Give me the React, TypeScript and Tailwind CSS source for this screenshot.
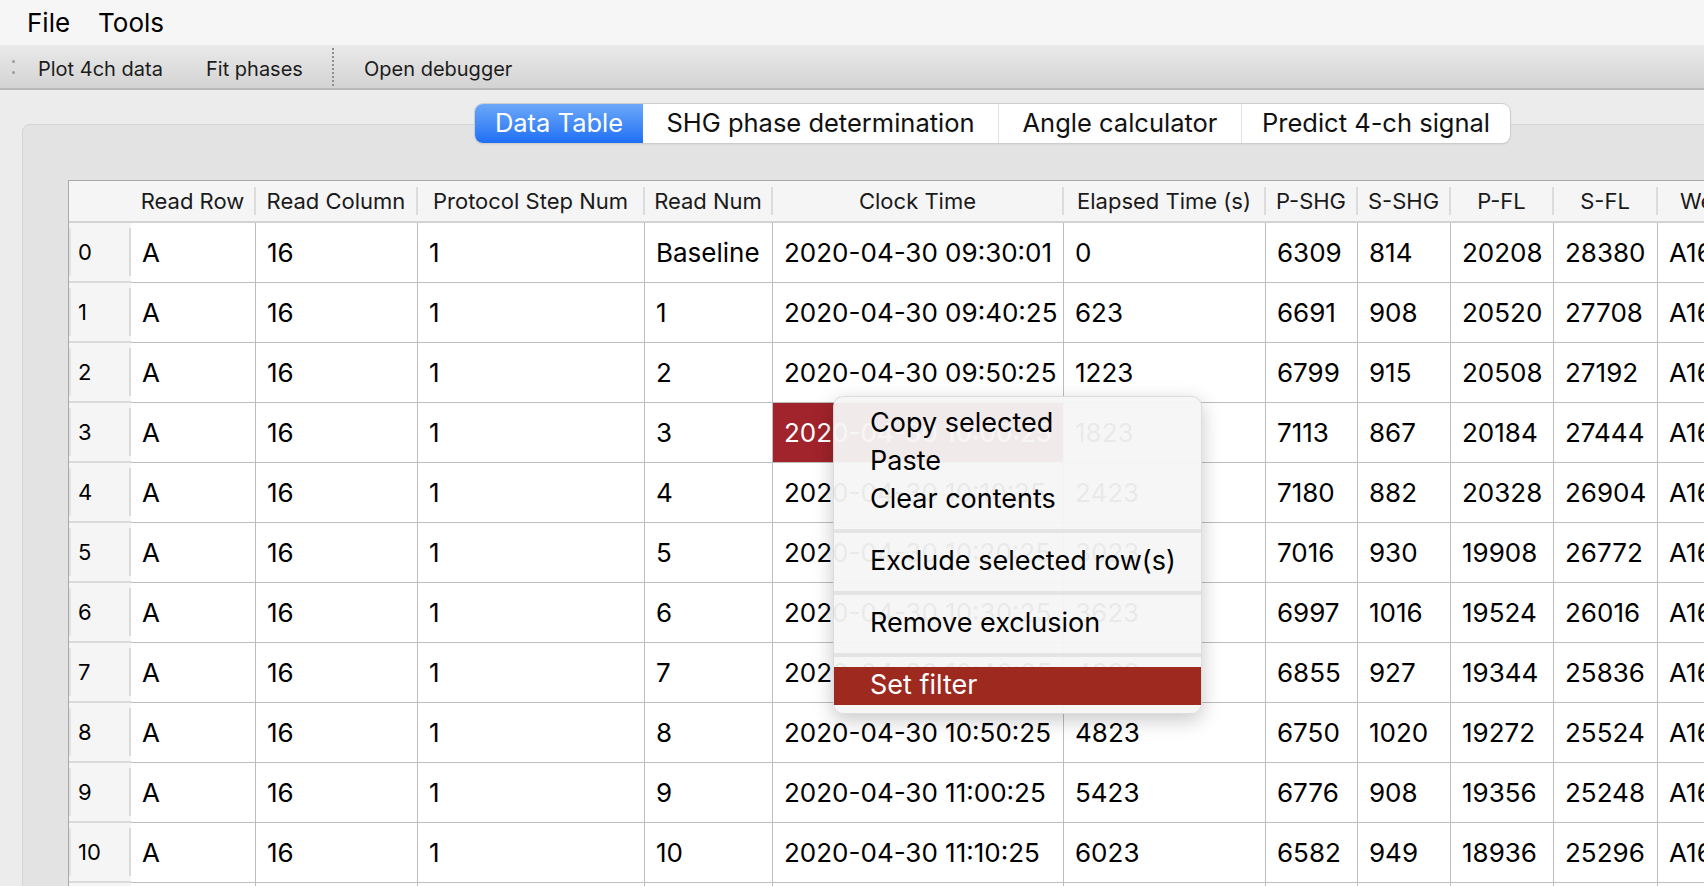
const cols = [
  { name: "Read Row", w: "w-[125px]" },
  { name: "Read Column", w: "w-[162px]" },
  { name: "Protocol Step Num", w: "w-[227px]" },
  { name: "Read Num", w: "w-[128px]" },
  { name: "Clock Time", w: "w-[291px]" },
  { name: "Elapsed Time (s)", w: "w-[202px]" },
  { name: "P-SHG", w: "w-[92px]" },
  { name: "S-SHG", w: "w-[93px]" },
  { name: "P-FL", w: "w-[103px]" },
  { name: "S-FL", w: "w-[104px]" },
  { name: "Well", w: "w-[88px]" },
];

const rows = [
  ["Baseline", "09:30:01", "0", "6309", "814", "20208", "28380"],
  ["1", "09:40:25", "623", "6691", "908", "20520", "27708"],
  ["2", "09:50:25", "1223", "6799", "915", "20508", "27192"],
  ["3", "10:00:25", "1823", "7113", "867", "20184", "27444"],
  ["4", "10:10:25", "2423", "7180", "882", "20328", "26904"],
  ["5", "10:20:25", "3023", "7016", "930", "19908", "26772"],
  ["6", "10:30:25", "3623", "6997", "1016", "19524", "26016"],
  ["7", "10:40:25", "4223", "6855", "927", "19344", "25836"],
  ["8", "10:50:25", "4823", "6750", "1020", "19272", "25524"],
  ["9", "11:00:25", "5423", "6776", "908", "19356", "25248"],
  ["10", "11:10:25", "6023", "6582", "949", "18936", "25296"],
  ["11", "11:20:25", "6623", "6610", "921", "18890", "25110"],
];

const tabs = [
  { label: "Data Table", w: "w-[168px]" },
  { label: "SHG phase determination", w: "w-[355px]" },
  { label: "Angle calculator", w: "w-[243px]" },
  { label: "Predict 4-ch signal", w: "w-[269px]" },
];

function HeaderRow() {
  return (
    <div className="flex h-[42px] bg-[#f5f5f5] border-b-2 border-[#d3d3d3]">
      <div className="w-[62px] shrink-0" />
      {cols.map((c, i) => (
        <div key={c.name} className={`${c.w} shrink-0 flex py-[6px]`}>
          <div className="flex-1 flex items-center justify-center text-[22px] text-[#1a1a1a] whitespace-nowrap">
            {c.name}
          </div>
          {i < cols.length - 1 && <div className="w-[2px] bg-[#dcdcdc]" />}
        </div>
      ))}
    </div>
  );
}

function DataRow({ idx, r }: { idx: number; r: string[] }) {
  const cells = ["A", "16", "1", r[0], "2020-04-30 " + r[1], r[2], r[3], r[4], r[5], r[6], "A16"];
  return (
    <div className="flex h-[60px]">
      <div className="w-[62px] shrink-0 bg-[#f5f5f5] border-b-2 border-[#dadada] flex py-[5px]">
        <div className="w-[2px] bg-[#e3e3e3]" />
        <div className="flex-1 flex items-center pl-[7px] text-[22px] text-black">{idx}</div>
        <div className="w-[2px] bg-[#d9d9d9]" />
      </div>
      {cells.map((v, i) => {
        const selected = idx === 3 && i === 4;
        return (
          <div
            key={i}
            className={`${cols[i].w} shrink-0 border-b border-[#bdbdbd] ${
              i < cols.length - 1 ? "border-r" : ""
            } flex items-center pl-[11px] text-[26px] whitespace-nowrap overflow-hidden ${
              selected ? "bg-[#a1232b] text-white" : "bg-white text-black"
            }`}
          >
            {v}
          </div>
        );
      })}
    </div>
  );
}

function ContextMenu() {
  const item = "h-[38px] flex items-center pl-[36px] pb-[2px] text-[27px] text-black";
  const sep = (
    <div className="h-[24px] flex items-center">
      <div className="h-[4px] w-full bg-[#e4e4e4]" />
    </div>
  );
  return (
    <div className="absolute left-[833px] top-[396px] w-[369px] py-[8px] rounded-[10px] bg-[#f6f6f6]/95 border border-black/10 shadow-[0_6px_20px_rgba(0,0,0,0.22)] whitespace-nowrap">
      <div className={item}>Copy selected</div>
      <div className={item}>Paste</div>
      <div className={item}>Clear contents</div>
      {sep}
      <div className={item}>Exclude selected row(s)</div>
      {sep}
      <div className={item}>Remove exclusion</div>
      {sep}
      <div className="h-[38px] flex items-center pl-[36px] pb-[2px] text-[27px] text-white bg-[#9e291f]">Set filter</div>
    </div>
  );
}

export default function App() {
  return (
    <div className="relative w-[1704px] h-[886px] overflow-hidden bg-[#ececec] font-['Inter','Noto_Sans',sans-serif] text-black">
      {/* menu bar */}
      <div className="h-[45px] bg-[#f6f6f6] flex items-center pl-[27px] gap-[28px] text-[26px]">
        <span>File</span>
        <span>Tools</span>
      </div>

      {/* toolbar */}
      <div className="h-[45px] bg-gradient-to-b from-[#eaeaea] to-[#d3d3d3] border-b-2 border-[#b9b9b9] flex items-center text-[20px] text-[#1c1c1c]">
        <div className="ml-[12px] w-[3px] flex flex-col gap-[8px]">
          <div className="h-[3px] rounded-full bg-[#9c9c9c]" />
          <div className="h-[3px] rounded-full bg-[#9c9c9c]" />
        </div>
        <div className="ml-[23px] w-[168px] pt-[4px] whitespace-nowrap">Plot 4ch data</div>
        <div className="w-[126px] pt-[4px] whitespace-nowrap">Fit phases</div>
        <div className="h-[38px] border-l-2 border-dotted border-[#8f8f8f]" />
        <div className="ml-[30px] pt-[4px] whitespace-nowrap">Open debugger</div>
      </div>

      {/* tab widget */}
      <div className="pt-[14px]">
        <div className="relative z-10 pl-[475px] flex">
          <div className="flex h-[39px] rounded-[8px] bg-white overflow-hidden shadow-[0_0_0_1px_#cdcdcd,0_1px_2px_rgba(0,0,0,0.15)] text-[25.5px]">
            {tabs.map((t, i) => (
              <div
                key={t.label}
                className={`${t.w} flex items-center justify-center whitespace-nowrap ${
                  i === 0
                    ? "bg-gradient-to-b from-[#6ca8f8] to-[#1d6ef5] text-white"
                    : "text-[#111]"
                } ${i > 1 ? "border-l border-[#e2e2e2]" : ""}`}
              >
                {t.label}
              </div>
            ))}
          </div>
        </div>
        <div className="-mt-[19px] ml-[22px] w-[1760px] h-[800px] rounded-tl-[8px] border border-[#d4d4d4] bg-[#e3e3e3] overflow-hidden pt-[55px] pl-[45px]">
          <div className="w-max border-l border-t border-[#a9a9a9]">
            <HeaderRow />
            {rows.map((r, i) => (
              <DataRow key={i} idx={i} r={r} />
            ))}
          </div>
        </div>
      </div>

      <ContextMenu />
    </div>
  );
}
